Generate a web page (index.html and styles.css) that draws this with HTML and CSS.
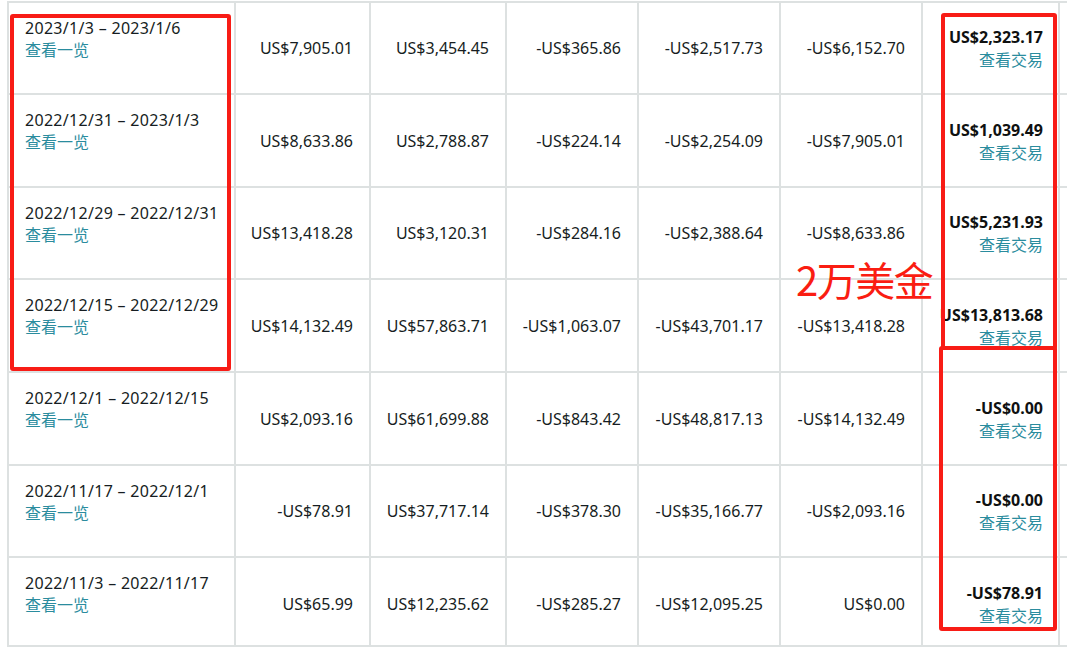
FILE: index.html
```html
<!DOCTYPE html>
<html lang="zh-CN">
<head>
<meta charset="utf-8">
<title>结算一览</title>
<link rel="stylesheet" href="styles.css">
</head>
<body>
<div class="page">
  <div class="grid">
    <div class="cell date"><span class="range">2023/1/3 – 2023/1/6</span><a class="link">查看一览</a></div>
    <div class="cell num">US$7,905.01</div>
    <div class="cell num">US$3,454.45</div>
    <div class="cell num">-US$365.86</div>
    <div class="cell num">-US$2,517.73</div>
    <div class="cell num">-US$6,152.70</div>
    <div class="cell total"><b>US$2,323.17</b><a class="link">查看交易</a></div>
    <div class="cell extra"></div>

    <div class="cell date"><span class="range">2022/12/31 – 2023/1/3</span><a class="link">查看一览</a></div>
    <div class="cell num">US$8,633.86</div>
    <div class="cell num">US$2,788.87</div>
    <div class="cell num">-US$224.14</div>
    <div class="cell num">-US$2,254.09</div>
    <div class="cell num">-US$7,905.01</div>
    <div class="cell total"><b>US$1,039.49</b><a class="link">查看交易</a></div>
    <div class="cell extra"></div>

    <div class="cell date"><span class="range">2022/12/29 – 2022/12/31</span><a class="link">查看一览</a></div>
    <div class="cell num">US$13,418.28</div>
    <div class="cell num">US$3,120.31</div>
    <div class="cell num">-US$284.16</div>
    <div class="cell num">-US$2,388.64</div>
    <div class="cell num">-US$8,633.86</div>
    <div class="cell total"><b>US$5,231.93</b><a class="link">查看交易</a></div>
    <div class="cell extra"></div>

    <div class="cell date"><span class="range">2022/12/15 – 2022/12/29</span><a class="link">查看一览</a></div>
    <div class="cell num">US$14,132.49</div>
    <div class="cell num">US$57,863.71</div>
    <div class="cell num">-US$1,063.07</div>
    <div class="cell num">-US$43,701.17</div>
    <div class="cell num">-US$13,418.28</div>
    <div class="cell total"><b>US$13,813.68</b><a class="link">查看交易</a></div>
    <div class="cell extra"></div>

    <div class="cell date"><span class="range">2022/12/1 – 2022/12/15</span><a class="link">查看一览</a></div>
    <div class="cell num">US$2,093.16</div>
    <div class="cell num">US$61,699.88</div>
    <div class="cell num">-US$843.42</div>
    <div class="cell num">-US$48,817.13</div>
    <div class="cell num">-US$14,132.49</div>
    <div class="cell total"><b>-US$0.00</b><a class="link">查看交易</a></div>
    <div class="cell extra"></div>

    <div class="cell date"><span class="range">2022/11/17 – 2022/12/1</span><a class="link">查看一览</a></div>
    <div class="cell num">-US$78.91</div>
    <div class="cell num">US$37,717.14</div>
    <div class="cell num">-US$378.30</div>
    <div class="cell num">-US$35,166.77</div>
    <div class="cell num">-US$2,093.16</div>
    <div class="cell total"><b>-US$0.00</b><a class="link">查看交易</a></div>
    <div class="cell extra"></div>

    <div class="cell date last"><span class="range">2022/11/3 – 2022/11/17</span><a class="link">查看一览</a></div>
    <div class="cell num last">US$65.99</div>
    <div class="cell num last">US$12,235.62</div>
    <div class="cell num last">-US$285.27</div>
    <div class="cell num last">-US$12,095.25</div>
    <div class="cell num last">US$0.00</div>
    <div class="cell total last"><b>-US$78.91</b><a class="link">查看交易</a></div>
    <div class="cell extra last"></div>
  </div>

  <div class="mark mark-left"></div>
  <div class="mark mark-right-top"></div>
  <div class="mark mark-right-bottom"></div>
  <div class="note">2万美金</div>
</div>
</body>
</html>
```

FILE: styles.css
```css
html, body {
  margin: 0;
  padding: 0;
  background: #ffffff;
  overflow: hidden;
}

body {
  width: 1067px;
  height: 647px;
  font-family: "Noto Sans", "Noto Sans CJK SC", sans-serif;
  font-size: 16px;
  color: #161d22;
}

.page {
  position: relative;
  width: 1067px;
  height: 647px;
  overflow: hidden;
}

.grid {
  margin: 1px 0 0 7px;
  display: grid;
  grid-template-columns: 225px 133px 134px 130px 140px 140px 135px 200px;
  grid-template-rows: 90px 91px 90px 91px 91px 90px 87px;
  gap: 2px;
  padding: 2px;
  background: #dde1e1;
  width: max-content;
}

.cell {
  background: #ffffff;
  box-sizing: border-box;
}

.date {
  display: flex;
  flex-direction: column;
  padding: 15px 0 0 16px;
  line-height: 21px;
  white-space: nowrap;
}

.range {
  letter-spacing: 0.3px;
}

.num {
  display: flex;
  align-items: center;
  justify-content: flex-end;
  padding-right: 16px;
  white-space: nowrap;
}

.num.last {
  padding-top: 4px;
}

.total {
  display: flex;
  flex-direction: column;
  align-items: flex-end;
  justify-content: center;
  padding-right: 15px;
  line-height: 22px;
  white-space: nowrap;
}

.total.last {
  padding-top: 4px;
}

.total b {
  font-weight: 700;
  color: #0f1111;
}

.link {
  color: #2a8c9e;
  font-family: "Noto Sans CJK SC", sans-serif;
  text-decoration: none;
}

.mark {
  position: absolute;
  border: 4px solid #f81c16;
  border-radius: 3px;
  box-sizing: border-box;
}

.mark-left {
  left: 10px;
  top: 14px;
  width: 221px;
  height: 357px;
}

.mark-right-top {
  left: 941px;
  top: 13px;
  width: 116px;
  height: 337px;
}

.mark-right-bottom {
  left: 939px;
  top: 346px;
  width: 118px;
  height: 285px;
}

.note {
  position: absolute;
  left: 796px;
  top: 255px;
  font-family: "Noto Sans CJK SC", sans-serif;
  font-size: 40px;
  line-height: 48px;
  letter-spacing: -1.5px;
  color: #fa1d12;
  white-space: nowrap;
}
```
